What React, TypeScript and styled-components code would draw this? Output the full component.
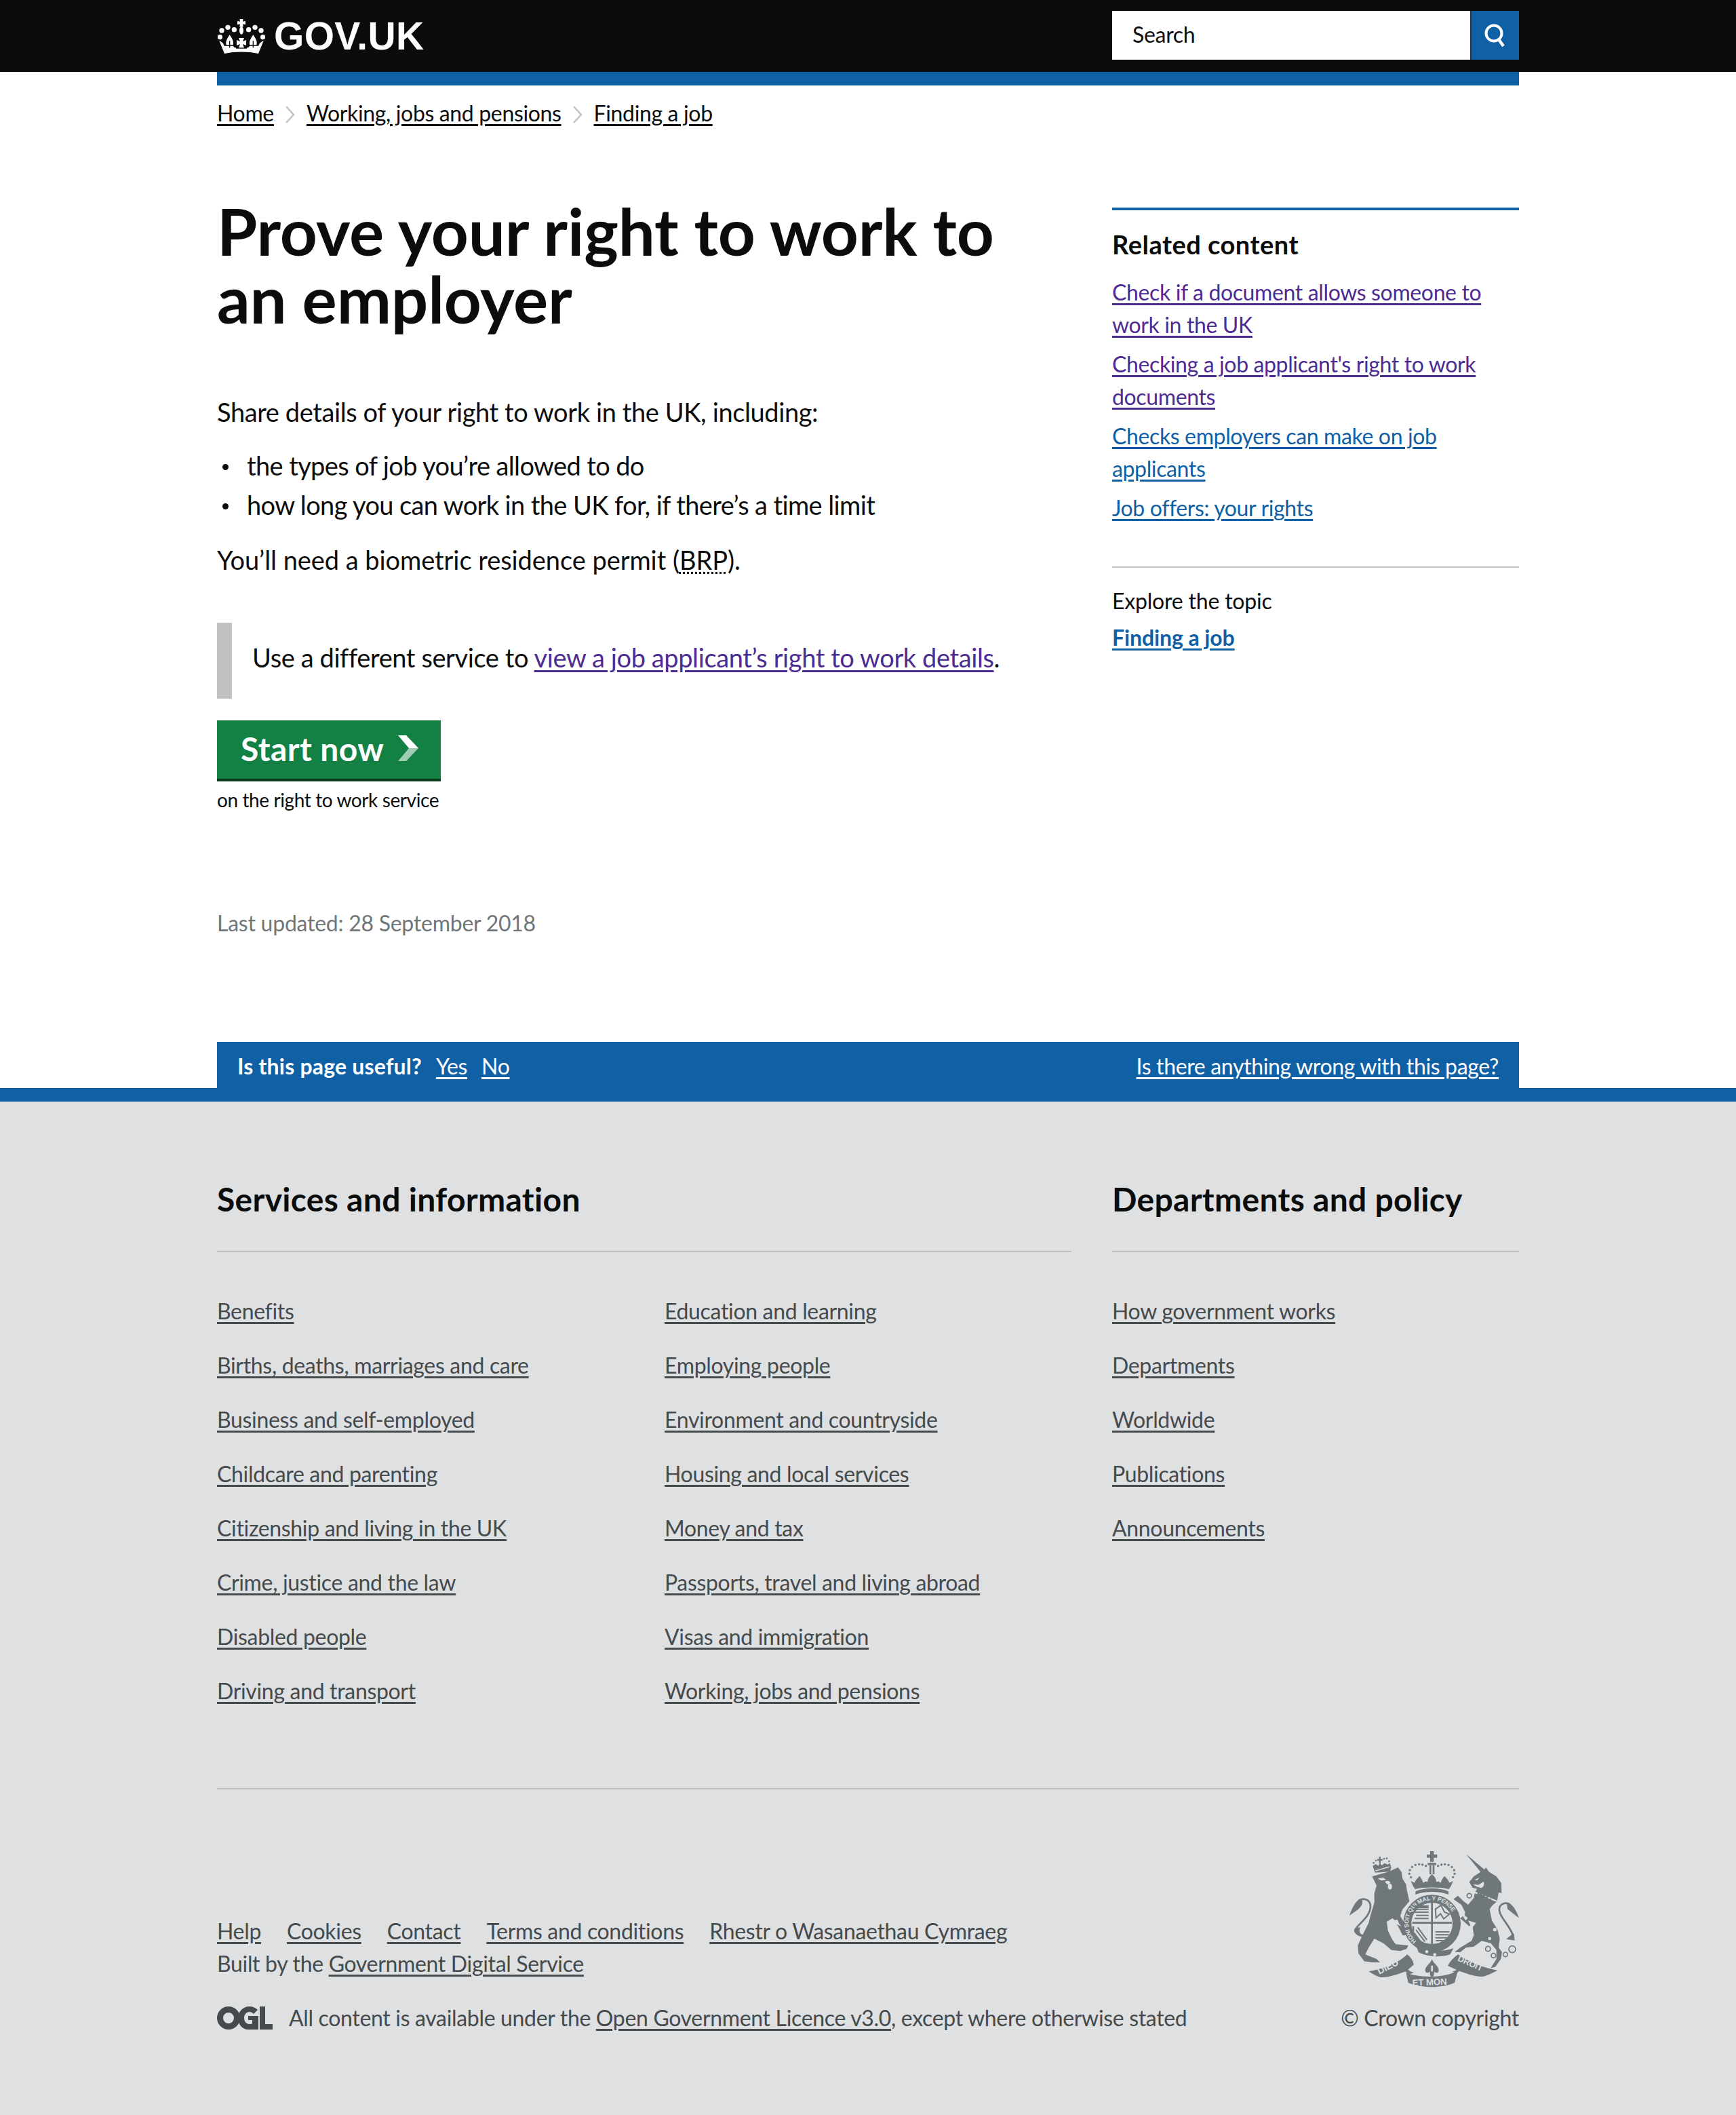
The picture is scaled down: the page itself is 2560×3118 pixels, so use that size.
import styled, { createGlobalStyle } from "styled-components";

const GlobalStyle = createGlobalStyle`
  body {
    margin: 0;
    background: #fff;
    color: #0b0c0c;
    font-family: "Lato", "Liberation Sans", sans-serif;
  }
  * {
    box-sizing: border-box;
  }
  a {
    text-decoration-thickness: 2px;
    text-underline-offset: 4px;
  }
`;

const Container = styled.div`
  width: 1920px;
  margin: 0 auto;
`;

const HeaderBar = styled.header`
  background: #0b0c0c;
  height: 106px;
`;

const HeaderInner = styled(Container)`
  height: 106px;
  display: flex;
  justify-content: space-between;
  align-items: flex-start;
`;

const Logo = styled.a`
  display: flex;
  align-items: center;
  gap: 13px;
  height: 106px;
  padding-left: 1px;
  color: #fff;
  font-family: "Liberation Sans", Arial, sans-serif;
  font-weight: 700;
  font-size: 57px;
  letter-spacing: 0.3px;
`;

const SearchBox = styled.div`
  width: 600px;
  height: 72px;
  margin-top: 16px;
  display: flex;
`;

const SearchField = styled.div`
  flex: 1;
  background: #fff;
  border-right: 2px solid #333;
  padding-left: 30px;
  font-size: 32px;
  line-height: 70px;
  letter-spacing: -0.3px;
`;

const SearchButton = styled.div`
  width: 70px;
  background: #0f60a5;
  display: flex;
  align-items: center;
  justify-content: center;
`;

const BlueBar = styled.div`
  height: 20px;
  background: #0f60a5;
`;

const Crumbs = styled.nav`
  display: flex;
  align-items: center;
  height: 40px;
  margin-top: 20px;
  font-size: 32px;
  letter-spacing: -0.35px;
`;

const CrumbLink = styled.a`
  color: #0b0c0c;
  text-decoration: underline;
`;

const CrumbArrow = styled.svg`
  width: 14px;
  height: 26px;
  margin: 6px 17px 0;
`;

const MainGrid = styled.main`
  display: grid;
  grid-template-columns: 1260px 600px;
  column-gap: 60px;
  margin-top: 108px;
  height: 1242px;
`;

const Title = styled.h1`
  margin: -4px 0 0;
  font-size: 96px;
  line-height: 100px;
  font-weight: 700;
  letter-spacing: -0.2px;
`;

const Para = styled.p<{ $top: number; $tracking: number }>`
  margin: ${(p) => p.$top}px 0 0;
  font-size: 38px;
  line-height: 50px;
  letter-spacing: ${(p) => p.$tracking}px;
`;

const Bullets = styled.ul`
  margin: 29px 0 0;
  padding: 0;
  list-style: none;
  font-size: 38px;
  line-height: 50px;
  letter-spacing: -0.62px;
`;

const Bullet = styled.li`
  display: flex;
  align-items: center;
  margin-bottom: 8px;

  &::before {
    content: "";
    width: 9px;
    height: 9px;
    margin: 4px 27px 0 8px;
    border-radius: 50%;
    background: #0b0c0c;
  }
`;

const Abbr = styled.abbr`
  text-decoration: underline dotted 3px;
  text-underline-offset: 3px;
`;

const Inset = styled.div`
  margin-top: 68px;
  height: 112px;
  border-left: 22px solid #bfc1c3;
  padding: 26px 0 0 30px;
  font-size: 38px;
  line-height: 50px;
  letter-spacing: -0.4px;
`;

const Visited = styled.a`
  color: #4c2c92;
  text-decoration: underline;
`;

const StartButton = styled.a`
  margin-top: 32px;
  width: 330px;
  height: 90px;
  background: #138143;
  border-bottom: 4px solid #0a3d1d;
  display: flex;
  align-items: center;
  padding: 0 0 4px 35px;
  gap: 21px;
  color: #fff;
  font-size: 48px;
  font-weight: 700;
  letter-spacing: 0.4px;
`;

const StartNote = styled.div`
  margin-top: 10px;
  font-size: 28px;
  line-height: 35px;
  letter-spacing: -0.4px;
`;

const Updated = styled.div`
  margin-top: 144px;
  font-size: 32px;
  line-height: 40px;
  letter-spacing: -0.25px;
  color: #6f777b;
`;

const Aside = styled.aside`
  border-top: 4px solid #0f60a5;
  margin-top: 12px;
  align-self: start;
`;

const AsideHeading = styled.h2`
  margin: 28px 0 0;
  font-size: 38px;
  line-height: 44px;
  font-weight: 700;
  letter-spacing: 0.5px;
`;

const RelatedList = styled.div`
  margin-top: 25px;
  display: flex;
  flex-direction: column;
  gap: 10px;
  font-size: 32px;
  line-height: 48px;
  letter-spacing: -0.37px;
  padding-bottom: 62px;
  border-bottom: 2px solid #bfc1c3;
`;

const RelatedLink = styled.a<{ $visited?: boolean }>`
  color: ${(p) => (p.$visited ? "#4c2c92" : "#0f60a5")};
  text-decoration: underline;
`;

const Explore = styled.div`
  margin-top: 27px;
  font-size: 32px;
  line-height: 44px;
  letter-spacing: -0.2px;
`;

const TopicLink = styled.a`
  display: block;
  margin-top: 10px;
  color: #0f60a5;
  font-size: 32px;
  line-height: 44px;
  font-weight: 700;
  letter-spacing: -0.1px;
  text-decoration: underline;
`;

const Feedback = styled(Container)`
  height: 68px;
  background: #0f60a5;
  color: #fff;
  display: flex;
  align-items: center;
  justify-content: space-between;
  padding: 2px 30px 0;
  font-size: 32px;
  letter-spacing: -0.35px;
`;

const FeedbackLeft = styled.div`
  display: flex;
  gap: 21px;
`;

const FeedbackQuestion = styled.span`
  font-weight: 700;
  letter-spacing: 0.2px;
`;

const FeedbackLink = styled.a`
  color: #fff;
  text-decoration: underline;
`;

const Footer = styled.footer`
  background: #dee0e2;
  border-top: 20px solid #0f60a5;
  height: 1514px;
  color: #454a4c;
  font-size: 32px;
  letter-spacing: -0.33px;
`;

const FooterNav = styled.div`
  display: grid;
  grid-template-columns: 1260px 600px;
  column-gap: 60px;
  padding-top: 114px;
`;

const FooterHeading = styled.h2`
  margin: 0;
  color: #0b0c0c;
  font-size: 48px;
  line-height: 60px;
  font-weight: 700;
  letter-spacing: 0.3px;
  padding-bottom: 46px;
  border-bottom: 2px solid #bfc1c3;
`;

const LinkColumns = styled.div<{ $cols: number }>`
  display: grid;
  grid-template-columns: repeat(${(p) => p.$cols}, 660px);
  margin-top: 47px;
`;

const LinkStack = styled.div`
  display: flex;
  flex-direction: column;
`;

const FooterLink = styled.a`
  color: #454a4c;
  text-decoration: underline;
`;

const StackLink = styled(FooterLink)`
  display: block;
  height: 80px;
  line-height: 80px;
`;

const Meta = styled.div`
  margin-top: 103px;
  border-top: 2px solid #bfc1c3;
  display: flex;
  justify-content: space-between;
  align-items: flex-end;
  height: 380px;
`;

const MetaLeft = styled.div`
  padding-bottom: 17px;
`;

const MetaLinks = styled.div`
  display: flex;
  gap: 38px;
  line-height: 48px;
`;

const Built = styled.div`
  line-height: 48px;
`;

const Licence = styled.div`
  display: flex;
  align-items: center;
  gap: 24px;
  margin-top: 32px;
  line-height: 48px;
`;

const MetaRight = styled.div`
  display: flex;
  flex-direction: column;
  align-items: flex-end;
  padding-bottom: 17px;
`;

const Copyright = styled.div`
  margin-top: 21px;
  line-height: 48px;
`;

const services = [
  ["Benefits", "Births, deaths, marriages and care", "Business and self-employed", "Childcare and parenting", "Citizenship and living in the UK", "Crime, justice and the law", "Disabled people", "Driving and transport"],
  ["Education and learning", "Employing people", "Environment and countryside", "Housing and local services", "Money and tax", "Passports, travel and living abroad", "Visas and immigration", "Working, jobs and pensions"],
];
const departments = ["How government works", "Departments", "Worldwide", "Publications", "Announcements"];
const metaLinks = ["Help", "Cookies", "Contact", "Terms and conditions", "Rhestr o Wasanaethau Cymraeg"];

function Crown() {
  return (
    <svg width="70" height="51" viewBox="15 15 210 153" fill="#fff">
      <path d="M112 14h16l-2 12 12-2v16l-12-2 2 12h-16l2-12-12 2V24l12 2z" />
      <ellipse cx="120" cy="66" rx="9" ry="17" />
      {[[33, 66], [60, 52], [88, 62], [152, 62], [180, 52], [207, 66], [25, 95], [215, 95]].map(([cx, cy]) => (
        <circle key={cx} cx={cx} cy={cy} r="11" />
      ))}
      <path d="M22 112c12 4 21 13 23 24l10-4c-8-12-1-26 13-47 14 21 21 35 13 47l9 10h60l9-10c-8-12-1-26 13-47 14 21 21 35 13 47l10 4c2-11 11-20 23-24l-23 56c-45-10-105-10-150 0z" />
      <path d="M96 94h48v52H96z" fill="#0b0c0c" />
      <path d="M108 99h24l-6 15 15-6v24l-15-6 6 16h-24l6-16-15 6v-24l15 6z" />
      <path d="M66 112h4v30h-4zM170 112h4v30h-4zM52 130h32v4H52zM156 130h32v4h-32z" fill="#0b0c0c" />
    </svg>
  );
}

function Chevron() {
  return (
    <CrumbArrow viewBox="0 0 14 26" fill="none">
      <path d="M1 1l11 12L1 25" stroke="#bfc1c3" strokeWidth="2.500" />
    </CrumbArrow>
  );
}

function StartArrow() {
  return (
    <svg width="30" height="38" viewBox="0 0 30 38">
      <path d="M0 0h12l18 19H16z" fill="#fff" />
      <path d="M16 19h14L12 38H0z" fill="#fff" fillOpacity="0.6" />
    </svg>
  );
}

function Ogl() {
  return (
    <svg width="82" height="34" viewBox="0 0 82 34" fill="#454a4c">
      <path fillRule="evenodd" d="M17 0a17 17 0 1 0 0 34 17 17 0 0 0 0-34zm0 9a8 8 0 1 1 0 16 8 8 0 0 1 0-16z" />
      <path d="M48 0c5 0 9 2 12 5l-6 6c-2-2-4-3-6-3-5 0-8 4-8 9s3 9 8 9c1 0 3 0 4-1v-5h-6v-6h15v20H46c-9 0-15-8-15-17S38 0 48 0z" />
      <path d="M63 0h8v26h11v8H63z" />
    </svg>
  );
}

const CREST = "#6f777b";
const CREST_BG = "#dee0e2";

function CrestLion() {
  return (
    <g transform="translate(75 75)">
      <path d="M115 125L185 105L230 85L245 105L250 135L265 160L270 190L280 235L250 270L240 300L270 350L285 385L250 385L230 345L205 310L180 325L185 365L205 405L220 425L275 430L268 445L240 455L200 450L165 420L125 400L100 440L85 470L135 490L150 505L115 505L80 500L55 465L52 430L75 380L100 330L110 290L125 240L125 200L135 165z" />
      <path d="M245 280L285 345" stroke={CREST_BG} strokeWidth="3" fill="none" />
      <path d="M140 135l25-5 12 10-20 3zM172 148c12-6 20-4 24 4l-8 10c-6-3-12-6-16-14z" fill={CREST_BG} />
      <ellipse cx="194" cy="170" rx="9" ry="13" fill={CREST_BG} />
      <path d="M205 310l10 8 12-2 8 18 10 12-22-10-16-6z" fill={CREST_BG} />
      {/* tail */}
      <path d="M88 388C62 388 36 376 40 360C55 335 110 300 108 255C105 225 75 218 55 232" fill="none" stroke={CREST} strokeWidth="8" />
      <path d="M72 222C45 222 25 268 15 298C35 282 62 272 72 245z" />
      <path d="M50 352C35 358 32 372 52 386C68 392 76 396 84 400L78 384C62 382 55 370 62 350z" />
      {/* crown on the lion */}
      <path d="M128 108l-10-30 14-8 10 8 8-12 8 10 12-10 14 6 10-6 6 20-6 18z" />
      <path d="M130 100l62-18" stroke={CREST_BG} strokeWidth="4" fill="none" />
      <path d="M146 38h7v10h8v7h-8v13h-7V55h-8v-7h8z" />
      {[[122, 65], [132, 55], [168, 47], [180, 45], [190, 58]].map(([cx, cy]) => (
        <circle key={cx} cx={cx} cy={cy} r="4" />
      ))}
    </g>
  );
}

function CrestUnicorn() {
  return (
    <g transform="translate(465 75)">
      <path d="M205 105L140 25L222 95L228 85L243 105L275 125L297 155L298 200L285 195L278 235L255 255L245 270L255 320L280 360L290 400L285 440L300 460L295 490L270 525L250 530L275 490L275 450L250 420L210 410L175 435L140 440L115 460L90 460L115 440L165 410L175 385L170 350L185 330L150 320L160 340L155 345L115 310L140 290L120 250L85 225L105 210L130 235L150 250L175 220L180 195L190 180L170 175L155 150L175 125z" />
      <path d="M178 195l100 40" stroke={CREST_BG} strokeWidth="7" fill="none" />
      <path d="M190 200l6-8 4 10 10-6 2 12 10-4 4 12 10-4 4 12 10-2 4 12-64-26z" />
      <path d="M178 140l22-10-10 12zM172 160l24 2 22-14c6 10 0 24-10 28l-22-6z" fill={CREST_BG} />
      <g fill={CREST_BG}>
        <circle cx="280" cy="315" r="9" />
        <circle cx="268" cy="360" r="8" />
        <circle cx="245" cy="400" r="7" />
      </g>
      <path d="M130 285l18 25-10 10-12-22z" fill={CREST_BG} />
      <g fill="none" stroke={CREST} strokeWidth="5">
        <circle cx="155" cy="210" r="10" />
        <circle cx="146" cy="292" r="9" />
        <circle cx="238" cy="445" r="11" />
        <circle cx="262" cy="475" r="10" />
        <circle cx="315" cy="470" r="10" />
        <circle cx="345" cy="447" r="15" />
      </g>
      {/* tail */}
      <path d="M350 395C345 350 285 305 288 268C290 245 320 235 335 250" fill="none" stroke={CREST} strokeWidth="8" />
      <path d="M320 240C345 240 365 280 375 308C355 295 340 280 325 270z" />
      <path d="M352 375L318 402L356 408z" />
    </g>
  );
}

function CrestShield() {
  return (
    <g>
      {/* crown */}
      <path d="M447 88h16v15h15v14h-15v18h-16v-18h-15v-14h15z" />
      <path d="M444 150h8v40h-8zM458 150h8v40h-8z" />
      <path d="M436 140h38v10h-38z" />
      <path d="M380 256c-8-10-14-24-18-36l16 8c2-10 12-20 22-30 8 10 14 20 16 30l10-6 10 2c0-14 8-24 19-34 11 10 19 20 19 34l10-2 10 6c2-10 8-20 16-30 10 10 20 20 22 30l16-8c-4 12-10 26-18 36-40-10-110-10-150 0z" />
      <path d="M382 266c40-18 106-18 146 0v14c-40-16-106-16-146 0z" />
      {[[362, 203], [355, 188], [357, 172], [367, 158], [382, 149], [398, 146], [413, 148], [428, 153], [482, 153], [497, 148], [512, 146], [528, 149], [543, 158], [553, 172], [555, 188], [548, 203]].map(([cx, cy]) => (
        <circle key={`${cx}-${cy}`} cx={cx} cy={cy} r="5" />
      ))}
      {/* garter */}
      <circle cx="455" cy="408" r="110" fill={CREST_BG} />
      <circle cx="455" cy="408" r="109" fill="none" stroke={CREST} strokeWidth="36" />
      <path id="garter" d="M390 490A104 104 0 1 1 520 490" fill="none" />
      <text fontFamily="Liberation Sans" fontWeight="700" fontSize="26" fill={CREST_BG}>
        <textPath href="#garter" startOffset="1%">HONI SOIT QUI MAL Y PENSE</textPath>
      </text>
      {/* quarters */}
      <path d="M451 312h8v205h-8zM368 401h175v8H368z" />
      <g fill="none" stroke={CREST} strokeWidth="6">
        <path d="M385 345h55M378 358h62M385 372h55M378 386h62" />
        <path d="M470 445h62M470 458h60M470 471h58M472 484h50" />
        <path d="M470 345l25-18 15 30 22 10-25 20-14-22-20 18z" />
        <path d="M392 425l40 55M384 436l40 52M376 450l38 50" />
      </g>
      <path d="M378 328h62v12h-62zM368 420h8v40h-8z" />
      {/* bottom of the garter */}
      <path d="M385 503c30 25 110 35 165 15l-15 27c-40 15-100 10-140-10z" />
      <circle cx="432" cy="533" r="7" fill={CREST_BG} />
      <circle cx="467" cy="546" r="7" fill={CREST_BG} />
    </g>
  );
}

function CrestMotto() {
  return (
    <g>
      <path d="M175 620C235 610 305 585 345 545C360 555 370 570 375 590L340 620C295 635 255 650 225 645C205 640 190 630 175 620z" />
      <path d="M340 625C390 650 520 650 570 615L555 670C500 695 410 695 350 670z" />
      <path d="M570 545C615 575 680 605 745 615C715 630 695 640 680 643C635 643 575 620 525 595C535 575 550 560 570 545z" />
      <path d="M345 575c-10 20 0 45 30 50l-20 8c-30-15-35-45-20-65zM575 575c10 20 0 40-30 45l16 8c30-15 35-40 24-60z" />
      <path d="M455 565c5 20 30 30 30 50 0 12-15 15-20 5l-2 18c-5 8-11 8-16 0l-2-18c-5 10-20 7-20-5 0-20 25-30 30-50z" />
      <path d="M451 595h8v25h-8z" fill={CREST_BG} />
      <g fontFamily="Liberation Sans" fontWeight="700" fill={CREST_BG}>
        <text x="222" y="634" fontSize="42" transform="rotate(-27 222 634)">DIEU</text>
        <text x="368" y="684" fontSize="40" transform="rotate(-2 368 684)">ET MON</text>
        <text x="566" y="572" fontSize="38" transform="rotate(24 566 572)">DROIT</text>
      </g>
    </g>
  );
}

function Crest() {
  return (
    <svg width="250" height="202" viewBox="90 85 750 606" fill={CREST}>
      <CrestLion />
      <CrestUnicorn />
      <CrestShield />
      <CrestMotto />
    </svg>
  );
}

export default function App() {
  return (
    <>
      <GlobalStyle />
      <HeaderBar>
        <HeaderInner>
          <Logo>
            <Crown />
            GOV.UK
          </Logo>
          <SearchBox>
            <SearchField>Search</SearchField>
            <SearchButton>
              <svg width="34" height="36" viewBox="0 0 34 36" fill="none" stroke="#fff">
                <circle cx="15" cy="15" r="11.500" strokeWidth="4" />
                <path d="M22 24l7 10" strokeWidth="4.500" />
              </svg>
            </SearchButton>
          </SearchBox>
        </HeaderInner>
      </HeaderBar>
      <Container>
        <BlueBar />
        <Crumbs>
          <CrumbLink>Home</CrumbLink>
          <Chevron />
          <CrumbLink>Working, jobs and pensions</CrumbLink>
          <Chevron />
          <CrumbLink>Finding a job</CrumbLink>
        </Crumbs>
        <MainGrid>
          <div>
            <Title>
              Prove your right to work to
              <br />
              an employer
            </Title>
            <Para $top={92} $tracking={-0.4}>Share details of your right to work in the UK, including:</Para>
            <Bullets>
              <Bullet>the types of job you’re allowed to do</Bullet>
              <Bullet>how long you can work in the UK for, if there’s a time limit</Bullet>
            </Bullets>
            <Para $top={31} $tracking={-0.06}>
              You’ll need a biometric residence permit (<Abbr>BRP</Abbr>).
            </Para>
            <Inset>
              Use a different service to <Visited>view a job applicant’s right to work details</Visited>.
            </Inset>
            <StartButton>
              Start now
              <StartArrow />
            </StartButton>
            <StartNote>on the right to work service</StartNote>
            <Updated>Last updated: 28 September 2018</Updated>
          </div>
          <Aside>
            <AsideHeading>Related content</AsideHeading>
            <RelatedList>
              <RelatedLink $visited>Check if a document allows someone to work in the UK</RelatedLink>
              <RelatedLink $visited>Checking a job applicant's right to work documents</RelatedLink>
              <RelatedLink>Checks employers can make on job applicants</RelatedLink>
              <RelatedLink>Job offers: your rights</RelatedLink>
            </RelatedList>
            <Explore>Explore the topic</Explore>
            <TopicLink>Finding a job</TopicLink>
          </Aside>
        </MainGrid>
        <Feedback>
          <FeedbackLeft>
            <FeedbackQuestion>Is this page useful?</FeedbackQuestion>
            <FeedbackLink>Yes</FeedbackLink>
            <FeedbackLink>No</FeedbackLink>
          </FeedbackLeft>
          <FeedbackLink>Is there anything wrong with this page?</FeedbackLink>
        </Feedback>
      </Container>
      <Footer>
        <Container>
          <FooterNav>
            <div>
              <FooterHeading>Services and information</FooterHeading>
              <LinkColumns $cols={2}>
                {services.map((col) => (
                  <LinkStack key={col[0]}>
                    {col.map((item) => (
                      <StackLink key={item}>{item}</StackLink>
                    ))}
                  </LinkStack>
                ))}
              </LinkColumns>
            </div>
            <div>
              <FooterHeading>Departments and policy</FooterHeading>
              <LinkColumns $cols={1}>
                <LinkStack>
                  {departments.map((item) => (
                    <StackLink key={item}>{item}</StackLink>
                  ))}
                </LinkStack>
              </LinkColumns>
            </div>
          </FooterNav>
          <Meta>
            <MetaLeft>
              <MetaLinks>
                {metaLinks.map((item) => (
                  <FooterLink key={item}>{item}</FooterLink>
                ))}
              </MetaLinks>
              <Built>
                Built by the <FooterLink>Government Digital Service</FooterLink>
              </Built>
              <Licence>
                <Ogl />
                <span>
                  All content is available under the <FooterLink>Open Government Licence v3.0</FooterLink>, except where otherwise stated
                </span>
              </Licence>
            </MetaLeft>
            <MetaRight>
              <Crest />
              <Copyright>© Crown copyright</Copyright>
            </MetaRight>
          </Meta>
        </Container>
      </Footer>
    </>
  );
}
